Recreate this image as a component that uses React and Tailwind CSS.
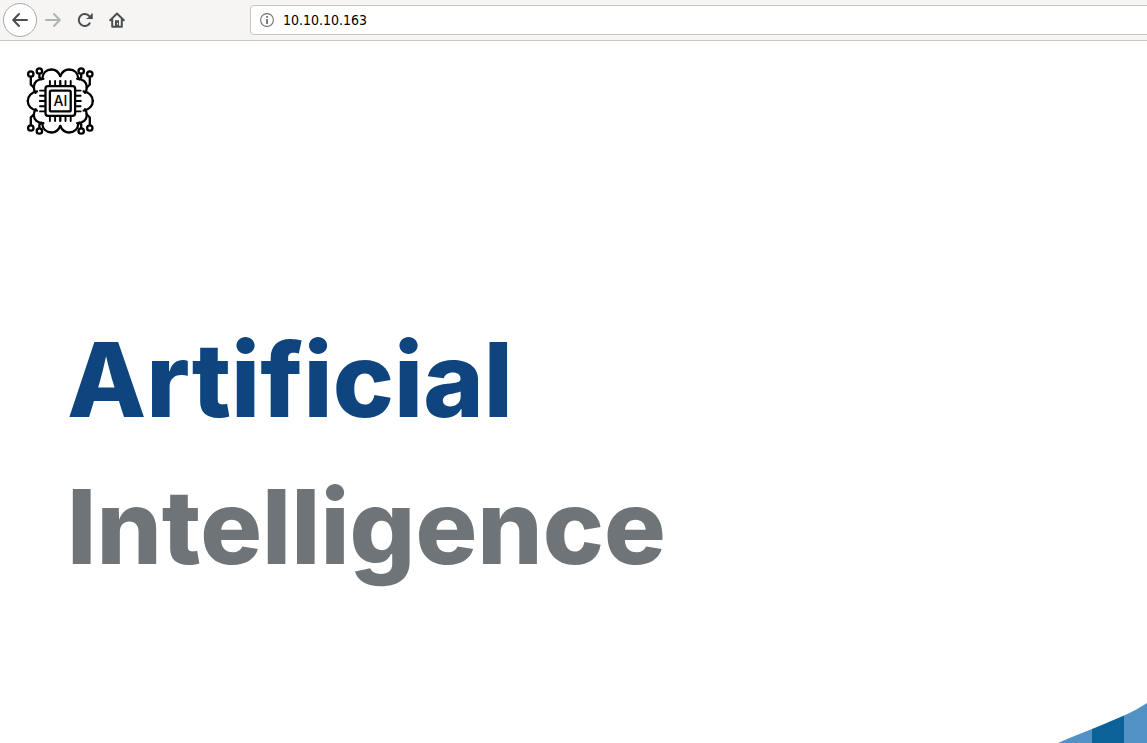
import React from "react";

const NAV_ICON = "size-4 fill-none stroke-current stroke-2";

function BackIcon() {
  return (
    <svg viewBox="0 0 16 16" className={NAV_ICON} strokeLinecap="round" strokeLinejoin="round" aria-hidden="true">
      <path d="M1.2 8H15M7 2 1.2 8 7 14" />
    </svg>
  );
}

function ForwardIcon() {
  return (
    <svg viewBox="0 0 16 16" className={NAV_ICON} strokeLinecap="round" strokeLinejoin="round" aria-hidden="true">
      <path d="M1 8H14.8M9 2 14.8 8 9 14" />
    </svg>
  );
}

function ReloadIcon() {
  return (
    <svg viewBox="0 0 16 16" className={NAV_ICON} strokeLinecap="round" aria-hidden="true">
      <path d="M12.7 11.4A6 6 0 1 1 12.4 4.2" />
      <path d="M15.5 1.2V7H9.7Z" fill="currentColor" stroke="none" />
      <path d="M14.9 1.8V6.5H10" strokeWidth="1.2" />
    </svg>
  );
}

function HomeIcon() {
  return (
    <svg viewBox="0 0 16 16" className={NAV_ICON} strokeLinecap="round" strokeLinejoin="round" aria-hidden="true">
      <path d="M1.2 8.3 8 1.5 14.8 8.3M3.2 7.5V14.8H12.8V7.5" />
      <path d="M6 15V8.2H10V15Z" fill="currentColor" stroke="none" />
      <path d="M8.5 11.3V12.3" stroke="#f6f5f4" strokeWidth="1" />
    </svg>
  );
}

function InfoIcon() {
  return (
    <svg viewBox="0 0 14 14" className="size-3.5 shrink-0" aria-hidden="true">
      <circle cx="7" cy="7" r="6.4" fill="none" stroke="#737373" strokeWidth="1.1" />
      <rect x="6.2" y="3" width="1.7" height="1.8" fill="#666" />
      <rect x="6.2" y="6" width="1.7" height="5" fill="#666" />
    </svg>
  );
}

/* One quarter of the chip: lobes, circuit nodes and pins. */
function LogoQuarter() {
  return (
    <g>
      <path d="M40.3 16C38.5 11.8 35.5 9.5 31.5 9.5C26.2 9.5 22.6 13 22.2 18.6" />
      <path d="M23.4 18.8C17.5 18.8 13.8 22.5 13.8 27C13.8 29.7 14.5 31.4 15.6 32.8" />
      <path d="M17 31.4C11.3 32.2 7.8 36.2 7.8 41" />
      <path d="M10.8 17V24.6L14 27.8M19.4 14V17.4L21.2 19.2" />
      <circle cx="10.8" cy="14" r="2.7" />
      <circle cx="19.4" cy="11" r="2.7" />
      <path d="M29.9 21V25.5M35.1 21V25.5M40.3 21V25.5" strokeWidth="1.9" />
      <path d="M20 30.6H25M20 35.8H25M20 41H25" strokeWidth="1.9" />
    </g>
  );
}

function Logo() {
  return (
    <svg viewBox="0 0 80 80" className="size-20" role="img" aria-label="AI" fill="none" stroke="#000" strokeWidth="2.3" strokeLinecap="round">
      <LogoQuarter />
      <g transform="translate(80.6 0) scale(-1 1)"><LogoQuarter /></g>
      <g transform="translate(0 82) scale(1 -1)"><LogoQuarter /></g>
      <g transform="translate(80.6 82) scale(-1 -1)"><LogoQuarter /></g>
      <rect x="25.5" y="26.2" width="29.6" height="29.6" rx="2.5" />
      <rect x="29.9" y="30.6" width="20.8" height="20.8" rx="1.5" />
      <text x="40.4" y="45.8" textAnchor="middle" fill="#000" stroke="none" fontSize="14" fontWeight="500" fontFamily="Inter, sans-serif">AI</text>
    </svg>
  );
}

function NavButton({ label, className = "", children }) {
  return (
    <button type="button" aria-label={label} className={`flex size-8 shrink-0 items-center justify-center ${className}`}>
      {children}
    </button>
  );
}

function Toolbar() {
  return (
    <header className="flex h-[41px] items-center overflow-hidden border-b border-[#c9c5bf] bg-[#f6f5f4] pl-[3px] text-[#4a5052]">
      <button type="button" aria-label="Back" className="flex size-[34px] shrink-0 items-center justify-center rounded-full border border-[#aaa] bg-white">
        <BackIcon />
      </button>
      <NavButton label="Forward" className="text-[#b2b4b4]"><ForwardIcon /></NavButton>
      <NavButton label="Reload"><ReloadIcon /></NavButton>
      <NavButton label="Home"><HomeIcon /></NavButton>
      <label className="-mr-2 ml-[117px] flex h-[30px] flex-1 items-center gap-2 rounded-[4px] border border-[#c9c5bf] bg-white pl-[9px]">
        <InfoIcon />
        <input
          type="text"
          aria-label="Address"
          defaultValue="10.10.10.163"
          className="min-w-0 flex-1 bg-transparent pl-px font-['DejaVu_Sans_Condensed','DejaVu_Sans',sans-serif] text-[14px] leading-5 text-black outline-none"
        />
      </label>
    </header>
  );
}

export default function App() {
  return (
    <div className="flex min-h-screen flex-col overflow-hidden bg-white">
      <Toolbar />
      <main className="flex flex-1 flex-col">
        <div className="px-5 pt-[19px]">
          <Logo />
        </div>
        <h1 className="mt-[166px] px-[67px] font-['Inter',sans-serif] text-[103px] leading-[147px] font-extrabold text-[#0f457e]">
          <span className="block">Artificial</span>
          <span className="block text-[#6e7477]">Intelligence</span>
        </h1>
        <svg viewBox="0 0 89 40" className="mt-auto h-10 w-[89px] self-end" aria-hidden="true">
          <path d="M0 40C12 34.5 22 31 34 26V40Z" fill="#5291c5" />
          <path d="M34 26C46 21 56 17 66 12.5V40H34Z" fill="#0a6299" />
          <path d="M66 12.5C75 8.5 82 4.5 89 0V40H66Z" fill="#5291c5" />
        </svg>
      </main>
    </div>
  );
}
